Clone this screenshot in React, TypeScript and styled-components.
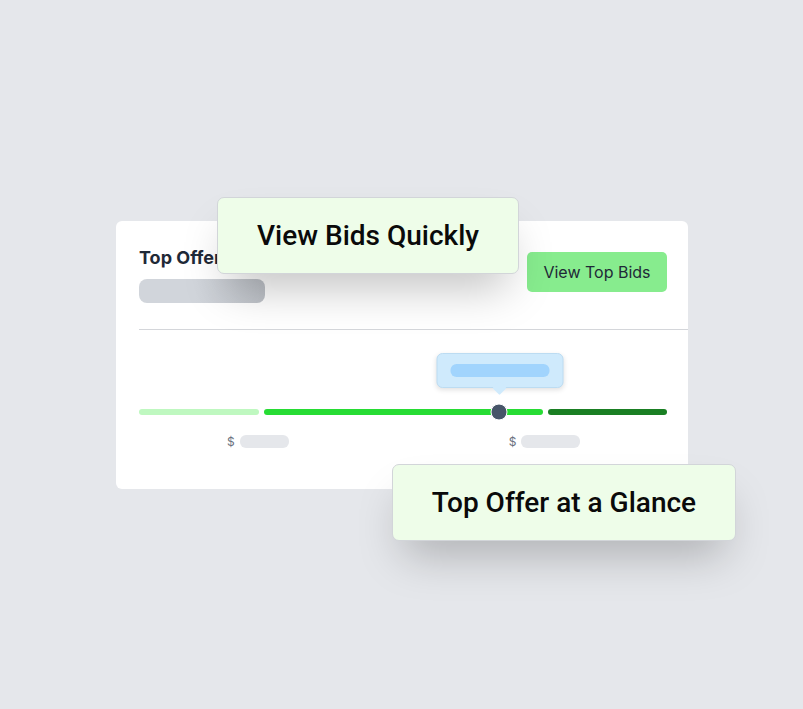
import React from "react";
import styled, { createGlobalStyle } from "styled-components";

const Global = createGlobalStyle`
  html, body { margin: 0; padding: 0; }
  body {
    background: #e5e7eb;
    font-family: Inter, "Noto Sans", sans-serif;
    width: 803px;
    height: 709px;
    overflow: hidden;
  }
`;

const Page = styled.div`
  width: 803px;
  height: 709px;
  box-sizing: border-box;
  padding: 221px 0 0 116px;
`;

const Stage = styled.div`
  position: relative;
  width: 572px;
`;

const Card = styled.div`
  width: 572px;
  height: 268px;
  background: #ffffff;
  border-radius: 6px;
  box-sizing: border-box;
`;

const Header = styled.div`
  display: flex;
  justify-content: space-between;
  align-items: flex-start;
  padding: 25px 21px 26px 23px;
`;

const TitleCol = styled.div`
  display: flex;
  flex-direction: column;
  gap: 9px;
`;

const Title = styled.div`
  font-size: 18px;
  line-height: 24px;
  font-weight: 700;
  color: #1f2937;
  white-space: nowrap;
`;

const Skeleton = styled.div`
  width: 126px;
  height: 24px;
  border-radius: 8px;
  background: linear-gradient(90deg, #d1d5db 0%, #d1d5db 45%, #bec2c8 100%);
`;

const Button = styled.button`
  margin-top: 6px;
  height: 40px;
  width: 140px;
  border: none;
  border-radius: 5px;
  background: #87ec8e;
  color: #1f2937;
  font-family: Inter, "Noto Sans", sans-serif;
  font-size: 16px;
  font-weight: 400;
  padding: 0;
`;

const Divider = styled.div`
  height: 1px;
  margin-left: 23px;
  background: #d4d6da;
`;

const SliderArea = styled.div`
  padding: 79px 21px 0 23px;
`;

const Track = styled.div`
  position: relative;
  display: flex;
  gap: 5px;
  height: 6px;
`;

const Segment = styled.div<{ $color: string; $w: number }>`
  width: ${(p) => p.$w}px;
  height: 6px;
  border-radius: 3px;
  background: ${(p) => p.$color};
`;

const Thumb = styled.div`
  position: absolute;
  top: 50%;
  width: 15px;
  height: 15px;
  border-radius: 50%;
  background: #475569;
  border: 1.5px solid #ffffff;
  transform: translate(-50%, -50%);
`;

const Tip = styled.div`
  position: absolute;
  bottom: 27px;
  width: 127px;
  height: 35px;
  box-sizing: border-box;
  transform: translateX(-50%);
  background: #cfeafc;
  border: 1px solid #bcdcf2;
  border-radius: 6px;
  box-shadow: 0 2px 5px rgba(0, 0, 0, 0.12);
  display: flex;
  align-items: center;
  justify-content: center;

  &::after {
    content: "";
    position: absolute;
    left: 50%;
    bottom: -6px;
    width: 10px;
    height: 10px;
    background: #cfeafc;
    transform: translateX(-50%) rotate(45deg);
    border-radius: 1px;
    z-index: -1;
  }
`;

const TipPill = styled.div`
  width: 99px;
  height: 13px;
  border-radius: 6px;
  background: #a1d4fd;
`;

const Labels = styled.div`
  display: flex;
  padding: 19px 0 0 88px;
`;

const PriceLabel = styled.div<{ $offset: number }>`
  display: flex;
  align-items: center;
  gap: 5px;
  margin-left: ${(p) => p.$offset}px;
  margin-top: ${(p) => (p.$offset > 0 ? 1 : 0)}px;
  font-size: 12px;
  color: #6b7280;
  line-height: 13px;
`;

const PricePill = styled.div<{ $w: number }>`
  width: ${(p) => p.$w}px;
  height: 13px;
  border-radius: 6px;
  background: #e5e7eb;
`;

const Callout = styled.div<{ $left: number; $top: number; $w: number }>`
  position: absolute;
  left: ${(p) => p.$left}px;
  top: ${(p) => p.$top}px;
  width: ${(p) => p.$w}px;
  height: 77px;
  box-sizing: border-box;
  background: #eefde9;
  border: 1px solid #d2d5d9;
  border-radius: 7px;
  box-shadow: 0 25px 45px -12px rgba(0, 0, 0, 0.25);
  display: flex;
  align-items: center;
  justify-content: center;
  font-family: Roboto, "Noto Sans", sans-serif;
  font-size: 28px;
  font-weight: 500;
  color: #0a0a0a;
  z-index: 2;
`;

const segments = [
  { w: 120, color: "#bff8c0" },
  { w: 279, color: "#27dc34" },
  { w: 119, color: "#1a7f23" },
];

const thumbX = 360;

export default function App() {
  return (
    <>
      <Global />
      <Page>
        <Stage>
          <Card>
            <Header>
              <TitleCol>
                <Title>Top Offer</Title>
                <Skeleton />
              </TitleCol>
              <Button>View Top Bids</Button>
            </Header>
            <Divider />
            <SliderArea>
              <Track>
                {segments.map((s, i) => (
                  <Segment key={i} $w={s.w} $color={s.color} />
                ))}
                <Tip style={{ left: thumbX + 0.5 }}>
                  <TipPill />
                </Tip>
                <Thumb style={{ left: thumbX }} />
              </Track>
              <Labels>
                <PriceLabel $offset={0}>
                  $<PricePill $w={49} />
                </PriceLabel>
                <PriceLabel $offset={220}>
                  $<PricePill $w={59} />
                </PriceLabel>
              </Labels>
            </SliderArea>
          </Card>
          <Callout $left={101} $top={-24} $w={302}>
            View Bids Quickly
          </Callout>
          <Callout $left={276} $top={243} $w={344}>
            Top Offer at a Glance
          </Callout>
        </Stage>
      </Page>
    </>
  );
}
